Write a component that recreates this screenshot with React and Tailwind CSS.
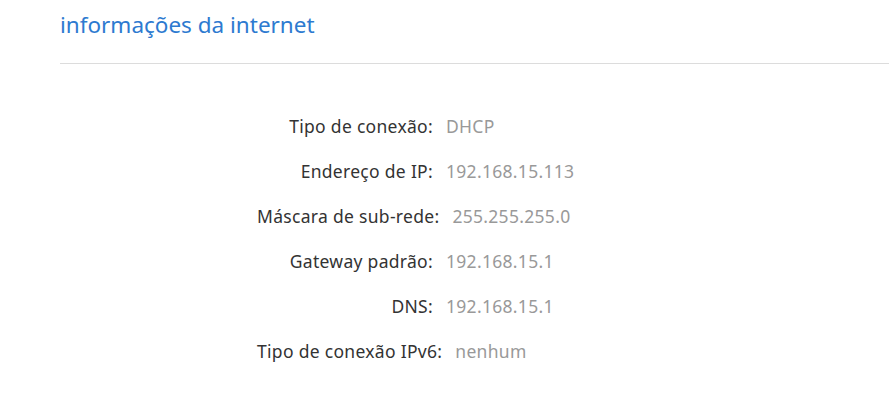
export default function App() {
  const rows = [
    ["Tipo de conexão:", "DHCP"],
    ["Endereço de IP:", "192.168.15.113"],
    ["Máscara de sub-rede:", "255.255.255.0"],
    ["Gateway padrão:", "192.168.15.1"],
    ["DNS:", "192.168.15.1"],
    ["Tipo de conexão IPv6:", "nenhum"],
  ];
  return (
    <div className="w-[889px] h-[411px] bg-white overflow-hidden" style={{ fontFamily: '"Noto Sans", "Open Sans", sans-serif' }}>
      <div className="pl-[60px]">
        <h1 className="pt-[9px] h-[63px] text-[22.5px] leading-[32px] text-[#2d7ad0]">informações da internet</h1>
        <div className="h-px bg-[#dcdcdc]" />
      </div>
      <div className="pt-[40px] pl-[257px] flex flex-col">
        {rows.map(([l, v]) => (
          <div key={l} className="flex h-[45px] items-center text-[17.5px] tracking-[0.3px]">
            <div className="min-w-[176px] text-right whitespace-nowrap text-[#333333]">{l}</div>
            <div className="ml-[13px] text-[#999999] whitespace-nowrap">{v}</div>
          </div>
        ))}
      </div>
    </div>
  );
}
